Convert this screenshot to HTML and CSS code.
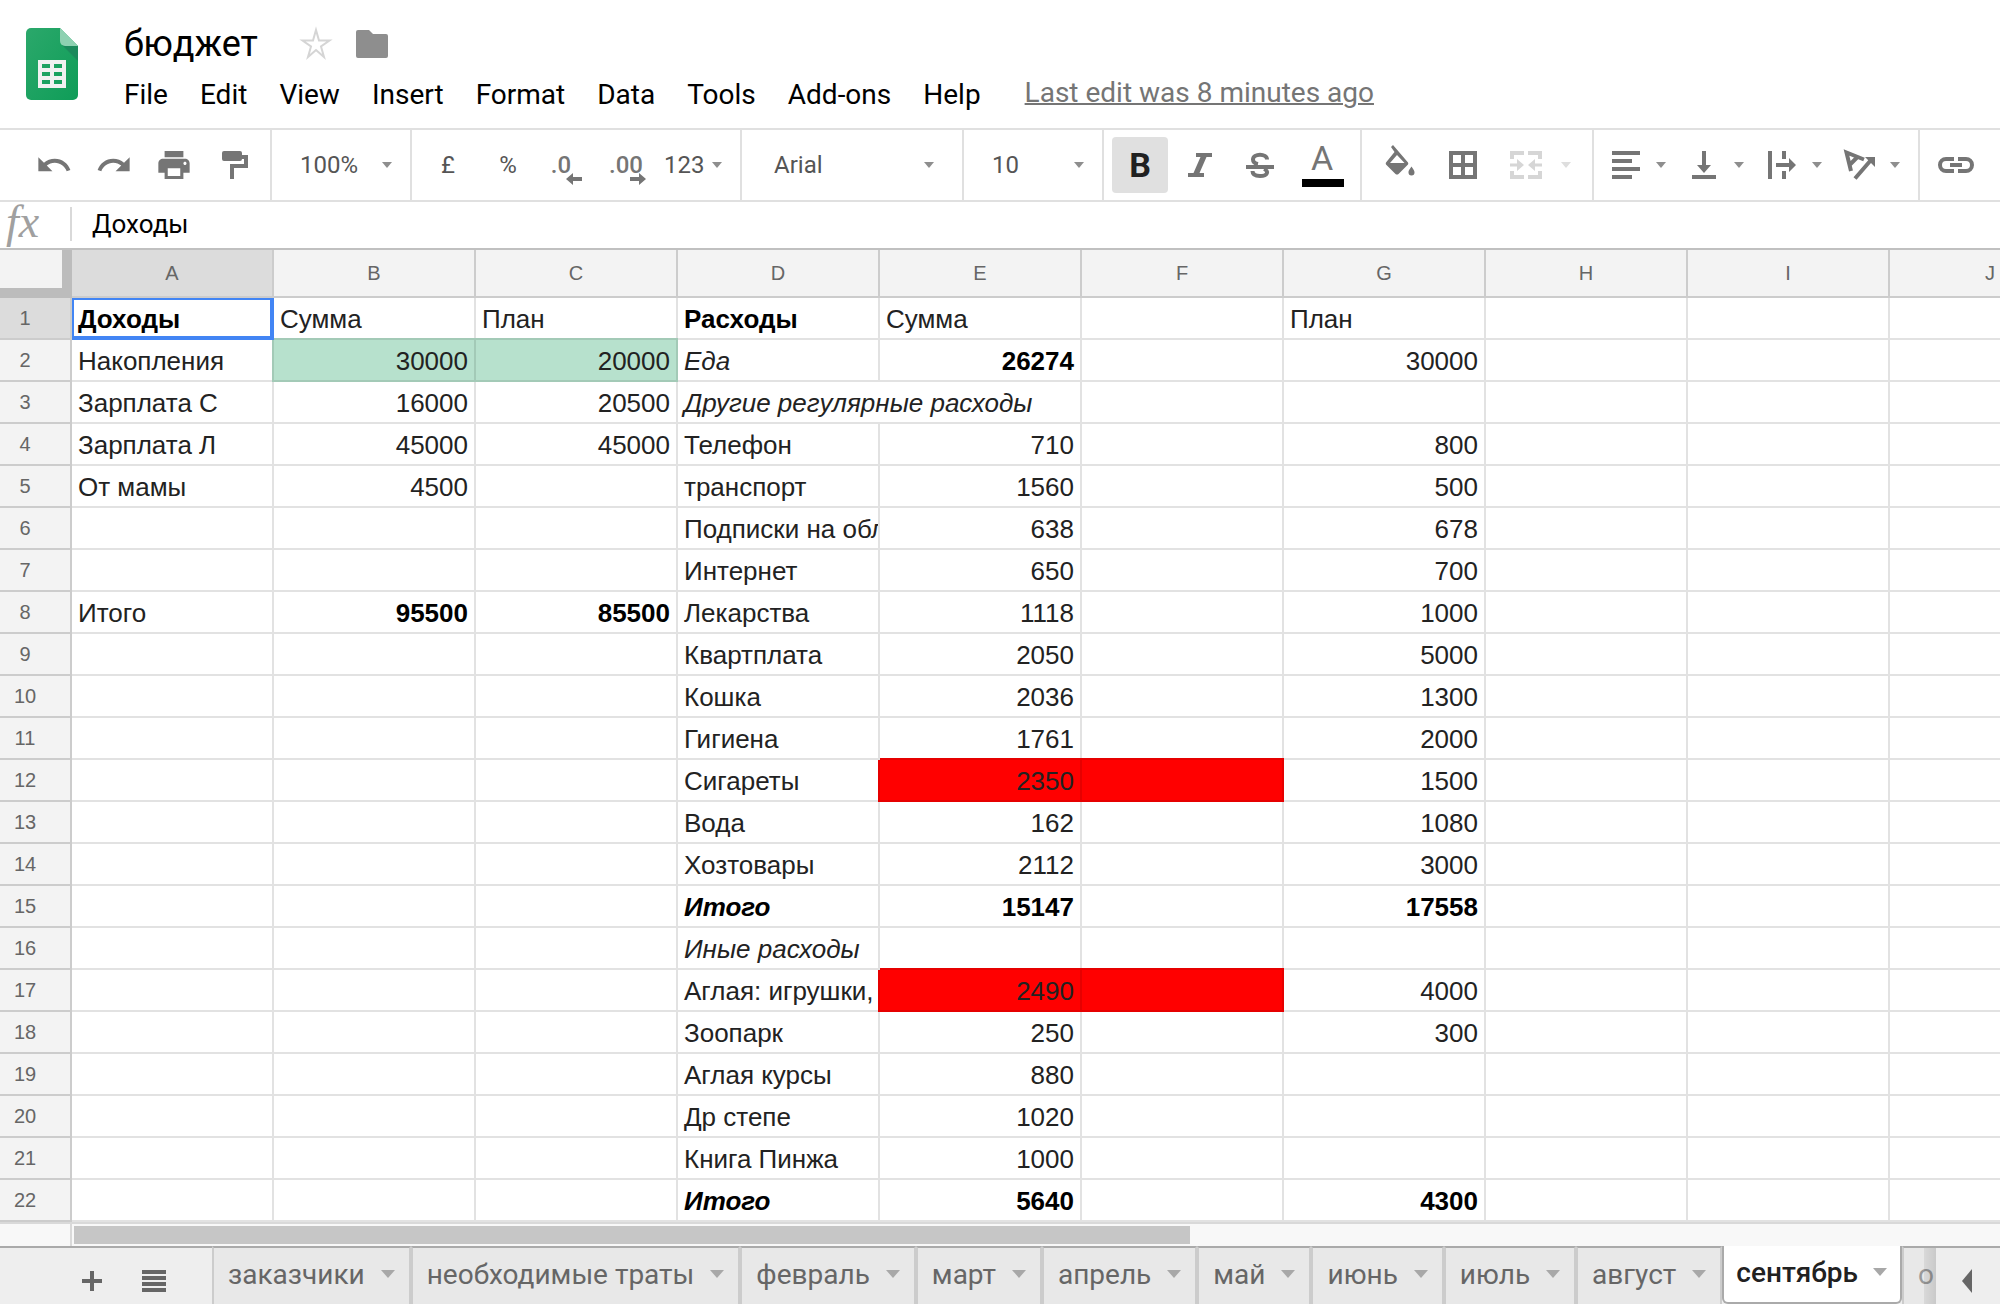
FILE: index.html
```html
<!DOCTYPE html>
<html lang="ru">
<head>
<meta charset="utf-8">
<title>бюджет</title>
<link rel="stylesheet" href="styles.css">
</head>
<body>
<header class="header">
  <svg class="logo" viewBox="0 0 52 72" aria-hidden="true">
    <defs>
      <linearGradient id="sheet" x1="0" y1="0" x2="1" y2="1"><stop offset="0" stop-color="#2ba86b"/><stop offset="1" stop-color="#0f9d58"/></linearGradient>
    </defs>
    <path fill="url(#sheet)" d="M5 0H34L52 18V67a5 5 0 0 1-5 5H5a5 5 0 0 1-5-5V5a5 5 0 0 1 5-5Z"/>
    <path fill="#1c8a5c" d="M36 17 52 33V18Z"/>
    <path fill="#8ed1b1" d="M34 0 52 18H39a5 5 0 0 1-5-5Z"/>
    <path fill="#f1f1f1" fill-rule="evenodd" d="M12 32H40V60H12ZM16 36V40H24V36ZM28 36V40H36V36ZM16 44V48H24V44ZM28 44V48H36V44ZM16 52V56H24V52ZM28 52V56H36V52Z"/>
  </svg>
  <div class="heading">
    <div class="title-row">
      <input class="doc-title" type="text" value="бюджет" aria-label="Document title">
      <button class="plain" type="button" aria-label="Star"><svg class="icon" viewBox="0 0 36 36"><path fill="none" stroke="#d5d5d5" stroke-width="2" d="M18 4 21 14.500H31.500L23 20.500 26 31 18 24 10 31 13 20.500 4.500 14.500H15Z"/></svg></button>
      <button class="plain" type="button" aria-label="Move to folder"><svg class="icon" viewBox="0 0 36 36"><path fill="#8e8e8e" d="M4 4H15L19 8H32a2 2 0 0 1 2 2V30a2 2 0 0 1-2 2H4a2 2 0 0 1-2-2V6a2 2 0 0 1 2-2Z"/></svg></button>
    </div>
    <nav class="menu">
      <button type="button">File</button>
      <button type="button">Edit</button>
      <button type="button">View</button>
      <button type="button">Insert</button>
      <button type="button">Format</button>
      <button type="button">Data</button>
      <button type="button">Tools</button>
      <button type="button">Add-ons</button>
      <button type="button">Help</button>
      <a class="last-edit" href="#history">Last edit was 8 minutes ago</a>
    </nav>
  </div>
</header>

<div class="toolbar" role="toolbar">
  <div class="group group-history">
    <button class="tool" type="button" aria-label="Undo"><svg class="icon" viewBox="0.500 0.500 23 23"><path d="M12.500 8c-2.650 0-5.050.990-6.900 2.600L2 7v9h9l-3.620-3.620c1.390-1.160 3.160-1.880 5.120-1.880 3.540 0 6.550 2.310 7.600 5.500l2.370-.780C21.080 11.030 17.150 8 12.500 8z"/></svg></button>
    <button class="tool" type="button" aria-label="Redo"><svg class="icon" viewBox="0.500 0.500 23 23"><path d="M18.400 10.600C16.550 8.990 14.150 8 11.500 8c-4.650 0-8.580 3.030-9.960 7.220L3.900 16c1.050-3.190 4.050-5.500 7.600-5.500 1.950 0 3.730.720 5.120 1.880L13 16h9V7l-3.600 3.600z"/></svg></button>
    <button class="tool" type="button" aria-label="Print"><svg class="icon" viewBox="0.500 0.500 23 23"><path d="M19 8H5c-1.660 0-3 1.340-3 3v6h4v4h12v-4h4v-6c0-1.660-1.340-3-3-3zm-3 11H8v-5h8v5zm3-7c-.550 0-1-.450-1-1s.450-1 1-1 1 .450 1 1-.450 1-1 1zm-1-9H6v4h12V3z"/></svg></button>
    <button class="tool" type="button" aria-label="Paint format"><svg class="icon" viewBox="0 0 36 36"><path d="M8 4H24a2 2 0 0 1 2 2V8H32V21H18V32H14V17H28V12H26a2 2 0 0 1-2 2H8a2 2 0 0 1-2-2V6a2 2 0 0 1 2-2Z"/></svg></button>
  </div>
  <label class="group picker picker-small"><select class="pick" aria-label="Zoom"><option>100%</option></select></label>
  <div class="group group-number">
    <button class="tool text" type="button">£</button>
    <button class="tool text" type="button">%</button>
    <button class="tool text decimal" type="button">.0<svg class="shift" viewBox="0 0 16 12"><path d="M7 0V4H16V8H7V12L0 6Z"/></svg></button>
    <button class="tool text decimal" type="button">.00<svg class="shift" viewBox="0 0 16 12"><path d="M9 0V4H0V8H9V12L16 6Z"/></svg></button>
    <button class="text formats" type="button">123<span class="caret"></span></button>
  </div>
  <label class="group picker picker-font"><select class="pick" aria-label="Font"><option>Arial</option></select></label>
  <label class="group picker picker-small"><select class="pick" aria-label="Font size"><option>10</option></select></label>
  <div class="group group-style">
    <button class="tool glyph active" type="button" aria-label="Bold"><b>B</b></button>
    <button class="tool" type="button" aria-label="Italic"><svg class="icon" viewBox="0 0 36 36"><path d="M14 6H30V10H24.500L17.500 26H22V30H6V26H11.500L18.500 10H14Z"/></svg></button>
    <button class="tool" type="button" aria-label="Strikethrough"><svg class="icon" viewBox="0 0 36 36"><path d="M4 18H32V22H4Z"/><path fill="none" stroke="#757575" stroke-width="4" d="M25 12.500C25 6 11 6 11 12.500 11 15 13 16.500 16 17M22 22C27 24 26 29 18 29 13 29 10.500 27 10.500 24"/></svg></button>
    <button class="tool glyph color" type="button" aria-label="Text color">A<span class="swatch"></span></button>
  </div>
  <div class="group group-cells">
    <button class="tool" type="button" aria-label="Fill color"><svg class="icon" viewBox="0 0 36 36"><path fill-rule="evenodd" d="M11 -2 9 0 12.500 5 4 15.500a2 2 0 0 0 0 2L13.500 27a2.500 2.500 0 0 0 3 0L26 17.500a2 2 0 0 0 0-2ZM15 8 22.500 16H8ZM29.500 19.500C27 23 26.500 24 26.500 25.500a3 3 0 0 0 6 0C32.500 24 31.500 22.500 29.500 19.500Z"/></svg></button>
    <button class="tool" type="button" aria-label="Borders"><svg class="icon" viewBox="0 0 36 36"><path fill-rule="evenodd" d="M4 4H32V32H4ZM8 8V16H16V8ZM20 8V16H28V8ZM8 20V28H16V20ZM20 20V28H28V20Z"/></svg></button>
    <button class="tool" type="button" aria-label="Merge cells" disabled><svg class="icon faded" viewBox="0 0 36 36"><path d="M2 4H16V8H6V12H2ZM20 4H34V12H30V8H20ZM2 24H6V28H16V32H2ZM30 24H34V32H20V28H30ZM2 16.500H9V12L16 18 9 24V19.500H2ZM34 16.500H27V12L20 18 27 24V19.500H34Z"/></svg></button>
    <button class="drop" type="button" aria-label="Merge options" disabled><span class="caret pale"></span></button>
  </div>
  <div class="group group-align">
    <button class="drop-tool" type="button" aria-label="Horizontal align"><svg class="icon" viewBox="0 0 36 36"><path d="M4 4H32V8H4ZM4 12H24V16H4ZM4 20H32V24H4ZM4 28H24V32H4Z"/></svg><span class="caret"></span></button>
    <button class="drop-tool" type="button" aria-label="Vertical align"><svg class="icon" viewBox="0 0 36 36"><path d="M16 4H20V18H25L18 26 11 18H16ZM6 28H30V32H6Z"/></svg><span class="caret"></span></button>
    <button class="drop-tool" type="button" aria-label="Text wrapping"><svg class="icon" viewBox="0 0 36 36"><path d="M4 4H8V32H4ZM18 4H22V12H18ZM18 24H22V32H18ZM12 16H25V11L32 18 25 25V20H12Z"/></svg><span class="caret"></span></button>
    <button class="drop-tool" type="button" aria-label="Text rotation"><svg class="icon" viewBox="0 0 36 36"><path fill="none" stroke="#757575" stroke-width="4" d="M9 24 4.500 5.500 22 12.500M8 17.500 15.500 10M13 31.500 29 13"/><path d="M23 10H33V20Z"/></svg><span class="caret"></span></button>
  </div>
  <div class="group group-link">
    <button class="tool" type="button" aria-label="Insert link"><svg class="icon" viewBox="0 0 36 36"><path fill="none" stroke="#757575" stroke-width="4" d="M16 12H8a6 6 0 0 0 0 12H16M20 12H28a6 6 0 0 1 0 12H20M12 18H24"/></svg></button>
  </div>
</div>

<label class="formula">
  <span class="fx">fx</span>
  <input class="formula-input" type="text" value="Доходы" aria-label="Formula">
</label>

<main class="sheet">
  <table class="grid">
    <colgroup><col class="numbers"><col span="10" class="data"></colgroup>
    <thead>
      <tr><td class="corner"></td><th class="picked">A</th><th>B</th><th>C</th><th>D</th><th>E</th><th>F</th><th>G</th><th>H</th><th>I</th><th>J</th></tr>
    </thead>
    <tbody>
      <tr><th class="picked">1</th><td class="selected b">Доходы</td><td>Сумма</td><td>План</td><td class="b">Расходы</td><td>Сумма</td><td></td><td>План</td><td></td><td></td><td></td></tr>
      <tr><th>2</th><td>Накопления</td><td class="n green">30000</td><td class="n green">20000</td><td class="i">Еда</td><td class="n b">26274</td><td></td><td class="n">30000</td><td></td><td></td><td></td></tr>
      <tr><th>3</th><td>Зарплата С</td><td class="n">16000</td><td class="n">20500</td><td class="i" colspan="2">Другие регулярные расходы</td><td></td><td></td><td></td><td></td><td></td></tr>
      <tr><th>4</th><td>Зарплата Л</td><td class="n">45000</td><td class="n">45000</td><td>Телефон</td><td class="n">710</td><td></td><td class="n">800</td><td></td><td></td><td></td></tr>
      <tr><th>5</th><td>От мамы</td><td class="n">4500</td><td></td><td>транспорт</td><td class="n">1560</td><td></td><td class="n">500</td><td></td><td></td><td></td></tr>
      <tr><th>6</th><td></td><td></td><td></td><td>Подписки на обл</td><td class="n">638</td><td></td><td class="n">678</td><td></td><td></td><td></td></tr>
      <tr><th>7</th><td></td><td></td><td></td><td>Интернет</td><td class="n">650</td><td></td><td class="n">700</td><td></td><td></td><td></td></tr>
      <tr><th>8</th><td>Итого</td><td class="n b">95500</td><td class="n b">85500</td><td>Лекарства</td><td class="n">1118</td><td></td><td class="n">1000</td><td></td><td></td><td></td></tr>
      <tr><th>9</th><td></td><td></td><td></td><td>Квартплата</td><td class="n">2050</td><td></td><td class="n">5000</td><td></td><td></td><td></td></tr>
      <tr><th>10</th><td></td><td></td><td></td><td>Кошка</td><td class="n">2036</td><td></td><td class="n">1300</td><td></td><td></td><td></td></tr>
      <tr><th>11</th><td></td><td></td><td></td><td>Гигиена</td><td class="n">1761</td><td></td><td class="n">2000</td><td></td><td></td><td></td></tr>
      <tr><th>12</th><td></td><td></td><td></td><td>Сигареты</td><td class="n red">2350</td><td class="red"></td><td class="n">1500</td><td></td><td></td><td></td></tr>
      <tr><th>13</th><td></td><td></td><td></td><td>Вода</td><td class="n">162</td><td></td><td class="n">1080</td><td></td><td></td><td></td></tr>
      <tr><th>14</th><td></td><td></td><td></td><td>Хозтовары</td><td class="n">2112</td><td></td><td class="n">3000</td><td></td><td></td><td></td></tr>
      <tr><th>15</th><td></td><td></td><td></td><td class="b i">Итого</td><td class="n b">15147</td><td></td><td class="n b">17558</td><td></td><td></td><td></td></tr>
      <tr><th>16</th><td></td><td></td><td></td><td class="i">Иные расходы</td><td></td><td></td><td></td><td></td><td></td><td></td></tr>
      <tr><th>17</th><td></td><td></td><td></td><td>Аглая: игрушки,</td><td class="n red">2490</td><td class="red"></td><td class="n">4000</td><td></td><td></td><td></td></tr>
      <tr><th>18</th><td></td><td></td><td></td><td>Зоопарк</td><td class="n">250</td><td></td><td class="n">300</td><td></td><td></td><td></td></tr>
      <tr><th>19</th><td></td><td></td><td></td><td>Аглая курсы</td><td class="n">880</td><td></td><td></td><td></td><td></td><td></td></tr>
      <tr><th>20</th><td></td><td></td><td></td><td>Др степе</td><td class="n">1020</td><td></td><td></td><td></td><td></td><td></td></tr>
      <tr><th>21</th><td></td><td></td><td></td><td>Книга Пинжа</td><td class="n">1000</td><td></td><td></td><td></td><td></td><td></td></tr>
      <tr><th>22</th><td></td><td></td><td></td><td class="b i">Итого</td><td class="n b">5640</td><td></td><td class="n b">4300</td><td></td><td></td><td></td></tr>
    </tbody>
  </table>
</main>

<div class="scroll"><div class="track"><div class="thumb"></div></div></div>

<footer class="tabbar">
  <div class="tab-tools">
    <button class="plain" type="button" aria-label="Add sheet"><svg class="mini" viewBox="0 0 24 24"><path d="M10 2H14V10H22V14H14V22H10V14H2V10H10Z"/></svg></button>
    <button class="plain" type="button" aria-label="All sheets"><svg class="mini" viewBox="0 0 24 24"><path d="M0 1H24V5H0ZM0 7H24V11H0ZM0 13H24V17H0ZM0 19H24V23H0Z"/></svg></button>
  </div>
  <div class="tabs">
    <button class="tab" type="button">заказчики<span class="caret wide"></span></button>
    <button class="tab" type="button">необходимые траты<span class="caret wide"></span></button>
    <button class="tab" type="button">февраль<span class="caret wide"></span></button>
    <button class="tab" type="button">март<span class="caret wide"></span></button>
    <button class="tab" type="button">апрель<span class="caret wide"></span></button>
    <button class="tab" type="button">май<span class="caret wide"></span></button>
    <button class="tab" type="button">июнь<span class="caret wide"></span></button>
    <button class="tab" type="button">июль<span class="caret wide"></span></button>
    <button class="tab" type="button">август<span class="caret wide"></span></button>
    <button class="tab current" type="button">сентябрь<span class="caret wide"></span></button>
    <button class="tab next" type="button">о</button>
  </div>
  <button class="tab-scroll" type="button" aria-label="Scroll tabs left"><svg class="mini" viewBox="0 0 24 24"><path d="M16 0V24L6 12Z"/></svg></button>
</footer>
</body>
</html>
```

FILE: styles.css
```css
* { box-sizing: border-box; }

body {
  display: flex;
  flex-direction: column;
  min-height: 100vh;
  margin: 0;
  overflow-x: hidden;
  background: #fff;
  color: #000;
  font-family: Roboto, sans-serif;
  font-size: 28px;
}

button, input, select {
  margin: 0;
  padding: 0;
  border: 0;
  background: none;
  color: inherit;
  font: inherit;
}

svg { display: block; overflow: visible; fill: #757575; }

.icon { width: 36px; height: 36px; }
.faded { fill: #d6d6d6; }

/* Title and menus */
.header {
  display: flex;
  gap: 46px;
  height: 128px;
  padding: 20px 26px 0;
}

.logo { flex: none; width: 52px; height: 72px; margin-top: 8px; }

.heading { display: flex; flex-direction: column; gap: 6px; }

.title-row {
  display: flex;
  align-items: center;
  gap: 20px;
  height: 48px;
}

.doc-title { width: 154px; font-size: 36px; }

.menu {
  display: flex;
  align-items: center;
  gap: 32px;
  height: 40px;
  white-space: nowrap;
}

.last-edit {
  margin: 0 0 4px 12px;
  color: #757575;
  text-decoration-thickness: 2px;
}

/* Toolbar */
.toolbar {
  display: flex;
  height: 74px;
  border-top: 2px solid #e0e0e0;
  border-bottom: 2px solid #e0e0e0;
  overflow: hidden;
  color: #555;
  font-size: 24px;
}

.group {
  display: flex;
  flex: none;
  align-items: center;
  border-right: 2px solid #e0e0e0;
}

.group:last-child { border-right: 0; }

.tool {
  display: grid;
  place-items: center;
  width: 56px;
  height: 56px;
  border-radius: 4px;
}

.caret {
  display: block;
  flex: none;
  border: 5px solid transparent;
  border-top: 6px solid #8e8e8e;
  border-bottom: 0;
}

.caret.pale { border-top-color: #dedede; }
.caret.wide { border-width: 8px 7px 0; border-top-color: #a8a8a8; }

.group-history { width: 272px; padding-left: 26px; gap: 4px; }

.picker { padding: 0 18px 0 28px; }
.picker::after {
  content: "";
  border: 5px solid transparent;
  border-top: 6px solid #8e8e8e;
  border-bottom: 0;
}
.picker-small { width: 140px; }
.picker-font { width: 222px; padding: 0 28px 0 32px; }
.pick { flex: 1; min-width: 0; appearance: none; }

.group-number { width: 330px; padding-left: 8px; gap: 4px; }
.decimal { position: relative; padding-right: 14px; color: #757575; font-weight: 500; }
.decimal + .decimal { padding-right: 4px; }
.shift { position: absolute; right: 14px; bottom: 8px; width: 16px; height: 12px; }
.decimal + .decimal .shift { right: 10px; }
.formats { display: flex; align-items: center; gap: 8px; padding-left: 4px; }

.group-style { width: 258px; padding-left: 8px; gap: 4px; }
.glyph { color: #757575; font-size: 34px; }
.active { background: #e0e0e0; color: #212121; }
.color { position: relative; width: 60px; padding-bottom: 14px; }
.swatch { position: absolute; left: 10px; bottom: 6px; width: 42px; height: 8px; background: #000; }

.group-cells { width: 232px; padding-left: 10px; gap: 7px; }

.group-align { width: 326px; padding-left: 14px; gap: 20px; }
.drop-tool { display: flex; align-items: center; gap: 12px; }

.group-link { padding-left: 8px; }

/* Formula bar */
.formula {
  display: flex;
  align-items: center;
  height: 48px;
  padding-bottom: 2px;
  border-bottom: 2px solid #c0c0c0;
}

.fx {
  width: 72px;
  height: 34px;
  padding-left: 6px;
  border-right: 2px solid #d9d9d9;
  color: #a0a0a0;
  font: italic 46px/30px "Liberation Serif", serif;
}

.formula-input { flex: 1; padding-left: 20px; font-size: 26px; }

/* Cells */
.sheet { overflow: hidden; border-bottom: 2px solid #d9d9d9; }

.grid {
  width: 2092px;
  border-collapse: separate;
  border-spacing: 0;
  table-layout: fixed;
  color: #222;
  font-family: "Liberation Sans", sans-serif;
  font-size: 26px;
  line-height: 30px;
}

.numbers { width: 72px; }
.data { width: 202px; }

.grid td, .grid th {
  height: 42px;
  padding: 2px 6px 0;
  overflow: hidden;
  border-right: 2px solid #e2e2e2;
  border-bottom: 2px solid #e2e2e2;
  text-align: left;
  white-space: nowrap;
}

.grid th {
  padding: 0;
  border-color: #ccc;
  background: #f3f3f3;
  color: #666;
  font-size: 20px;
  font-weight: 400;
  text-align: center;
}

.grid tbody th { padding-right: 20px; }
.grid thead th, .grid .corner { height: 48px; }
.grid .corner { border-right: 10px solid #bcbcbc; border-bottom: 10px solid #bcbcbc; background: #f3f3f3; }
.grid .picked { background: #dcdcdc; }

.grid .n { text-align: right; }
.grid .b { color: #000; font-weight: 700; }
.grid .i { font-style: italic; }

.grid .selected {
  border-color: #4285f4;
  box-shadow: inset 0 0 0 2px #4285f4;
}

.grid .green {
  border-color: #a3cab7;
  background: #b7e1cd;
  box-shadow: 0 -2px #a3cab7, -2px 0 #a3cab7;
}

.grid .red {
  border-color: #e60000;
  background: #f00;
  box-shadow: 0 -2px #e60000, -2px 0 #e60000;
}

/* Horizontal scrollbar */
.scroll { height: 22px; padding-left: 70px; background: #f8f8f8; }
.track { height: 22px; padding: 2px; border-left: 2px solid #d9d9d9; }
.thumb { width: 58%; height: 18px; background: #c6c6c6; }

/* Sheet tabs */
.tabbar {
  display: flex;
  flex: 1;
  min-height: 58px;
  background: #eee;
  color: #666;
}

.tab-tools {
  display: flex;
  flex: none;
  align-items: center;
  gap: 38px;
  width: 212px;
  padding: 10px 0 0 80px;
  border-top: 2px solid #aaa;
}

.mini { width: 24px; height: 24px; fill: #666; }

.tabs { position: relative; display: flex; flex: 1; min-width: 0; overflow: hidden; }

/* Fade where further tabs run under the scroll button */
.tabs::after {
  content: "";
  position: absolute;
  inset: 2px 0 0 auto;
  width: 12px;
  background: linear-gradient(to right, #0001, #0002);
}

.tab {
  display: flex;
  flex: none;
  align-items: center;
  gap: 16px;
  padding: 0 14px 4px;
  border: 2px solid #ccc;
  border-top-color: #aaa;
  border-bottom: 0;
  background: #e8e8e8;
}

.current {
  gap: 15px;
  padding: 0 13px 4px 12px;
  border: 2px solid #aaa;
  border-top: 0;
  border-radius: 0 0 6px 6px;
  background: #fff;
  color: #212121;
  font-weight: 500;
}

.next { flex: 1; color: #999; }

.tab-scroll {
  display: grid;
  place-items: center;
  width: 64px;
  padding: 10px 0 0;
  border-top: 2px solid #aaa;
}
```
